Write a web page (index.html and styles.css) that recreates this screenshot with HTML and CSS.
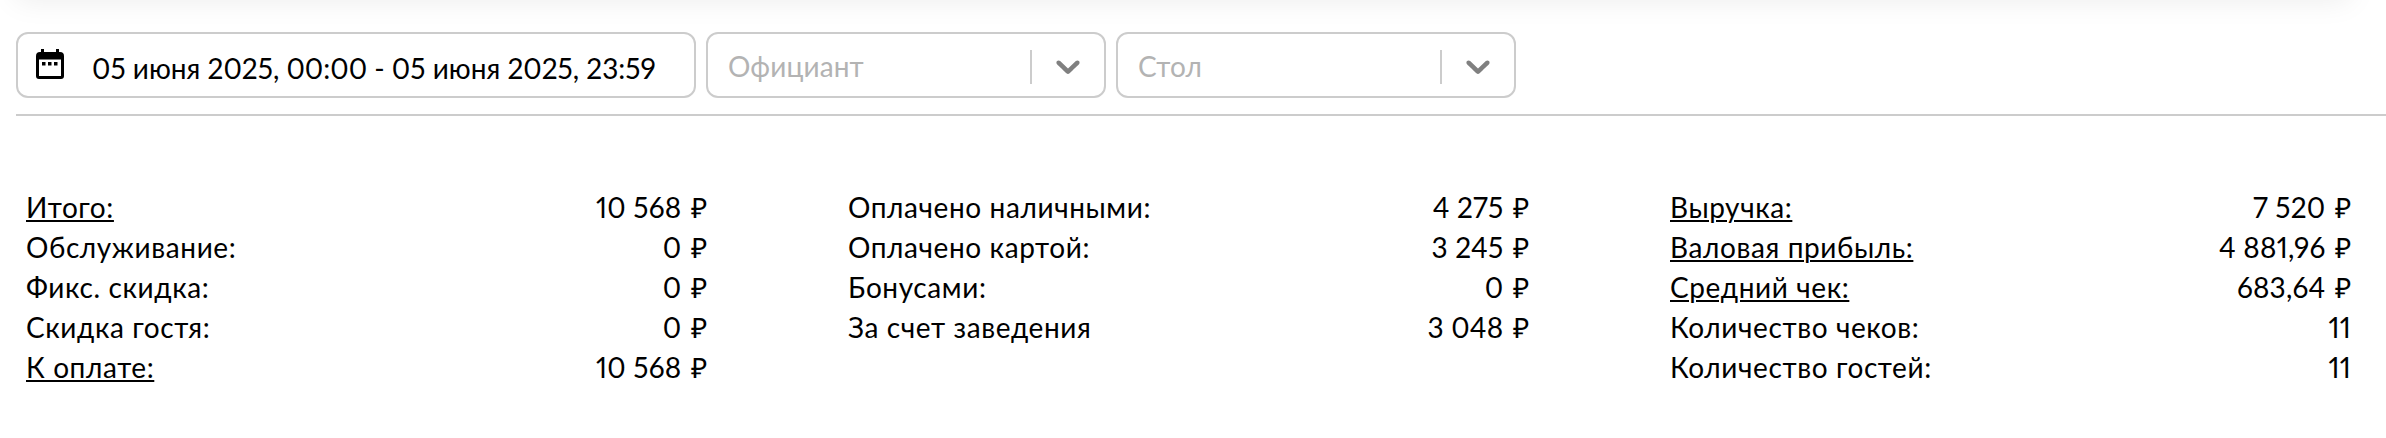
FILE: index.html
```html
<!DOCTYPE html>
<html lang="ru">

<head>
    <meta charset="UTF-8">
    <meta name="viewport" content="width=device-width, initial-scale=1.0">
    <title>Отчет по чекам</title>
    <link rel="stylesheet" href="styles.css">
</head>

<body>
    <div class="top-bar"></div>

    <!-- Фильтры -->
    <div class="filters">
        <div class="date-range">
            <svg class="calendar-icon" width="28" height="30" viewBox="0 0 28 30">
                <path fill="#000" fill-rule="evenodd" d="M5 0h3v3h12V0h3v3h1a4 4 0 0 1 4 4v20a3 3 0 0 1-3 3H3a3 3 0 0 1-3-3V7a4 4 0 0 1 4-4h1zM3 10.500v16.500h22V10.500z" />
                <path fill="#000" d="M6 13h3.500v3.500H6zM12 13h3.500v3.500H12zM18 13h3.500v3.500H18z" />
            </svg>
            <span class="date-text">05 июня 2025, 00:00 - 05 июня 2025, 23:59</span>
        </div>
        <div class="select">
            <span class="placeholder">Официант</span>
            <span class="separator"></span>
            <svg class="arrow" width="40" height="40" viewBox="0 0 20 20">
                <path d="M4.516 7.548c0.436-0.446 1.043-0.481 1.576 0l3.908 3.747 3.908-3.747c0.533-0.481 1.141-0.446 1.574 0 0.436 0.445 0.408 1.197 0 1.615-0.406 0.418-4.695 4.502-4.695 4.502-0.217 0.223-0.502 0.335-0.787 0.335s-0.570-0.112-0.789-0.335c0 0-4.287-4.084-4.695-4.502s-0.436-1.170 0-1.615z" />
            </svg>
        </div>
        <div class="select">
            <span class="placeholder">Стол</span>
            <span class="separator"></span>
            <svg class="arrow" width="40" height="40" viewBox="0 0 20 20">
                <path d="M4.516 7.548c0.436-0.446 1.043-0.481 1.576 0l3.908 3.747 3.908-3.747c0.533-0.481 1.141-0.446 1.574 0 0.436 0.445 0.408 1.197 0 1.615-0.406 0.418-4.695 4.502-4.695 4.502-0.217 0.223-0.502 0.335-0.787 0.335s-0.570-0.112-0.789-0.335c0 0-4.287-4.084-4.695-4.502s-0.436-1.170 0-1.615z" />
            </svg>
        </div>
    </div>

    <!-- Итоги -->
    <div class="summary">
        <div class="column">
            <div class="row"><span class="label hint">Итого:</span><span class="value">10 568 <span class="currency">₽</span></span></div>
            <div class="row"><span class="label">Обслуживание:</span><span class="value">0 <span class="currency">₽</span></span></div>
            <div class="row"><span class="label">Фикс. скидка:</span><span class="value">0 <span class="currency">₽</span></span></div>
            <div class="row"><span class="label">Скидка гостя:</span><span class="value">0 <span class="currency">₽</span></span></div>
            <div class="row"><span class="label hint">К оплате:</span><span class="value">10 568 <span class="currency">₽</span></span></div>
        </div>
        <div class="column">
            <div class="row"><span class="label">Оплачено наличными:</span><span class="value">4 275 <span class="currency">₽</span></span></div>
            <div class="row"><span class="label">Оплачено картой:</span><span class="value">3 245 <span class="currency">₽</span></span></div>
            <div class="row"><span class="label">Бонусами:</span><span class="value">0 <span class="currency">₽</span></span></div>
            <div class="row"><span class="label">За счет заведения</span><span class="value">3 048 <span class="currency">₽</span></span></div>
        </div>
        <div class="column">
            <div class="row"><span class="label hint">Выручка:</span><span class="value">7 520 <span class="currency">₽</span></span></div>
            <div class="row"><span class="label hint">Валовая прибыль:</span><span class="value">4 881,96 <span class="currency">₽</span></span></div>
            <div class="row"><span class="label hint">Средний чек:</span><span class="value">683,64 <span class="currency">₽</span></span></div>
            <div class="row"><span class="label">Количество чеков:</span><span class="value">11</span></div>
            <div class="row"><span class="label">Количество гостей:</span><span class="value">11</span></div>
        </div>
    </div>
</body>

</html>
```
FILE: styles.css
```css
* {
    box-sizing: border-box;
}

body {
    margin: 0;
    background-color: #fff;
    color: #000;
    font-family: Lato, "Open Sans", sans-serif;
    font-size: 28px;
    font-variant-numeric: proportional-nums;
    line-height: 40px;
    overflow: hidden;
}

/* Тень от верхней панели */
.top-bar {
    height: 60px;
    margin: -60px 36px 0 16px;
    box-shadow: 0 0 30px rgba(0, 0, 0, 0.08);
}

/* Фильтры */
.filters {
    display: flex;
    gap: 10px;
    margin-left: 16px;
    padding: 32px 0 16px;
    border-bottom: 2px solid #ccc;
}

.date-range,
.select {
    display: flex;
    align-items: center;
    height: 66px;
    border: 2px solid #ccc;
    border-radius: 12px;
    background-color: #fff;
}

.date-range {
    width: 680px;
    padding-left: 18px;
}

.calendar-icon {
    margin-bottom: 2px;
}

.date-text {
    margin-left: 28px;
    padding-top: 5px;
    white-space: nowrap;
}

.select {
    width: 400px;
    padding: 0 16px 0 20px;
}

.placeholder {
    flex: 1;
    padding-top: 2px;
    color: #b3b3b3;
    letter-spacing: 0.1px;
}

.separator {
    width: 2px;
    height: 34px;
    margin-right: 16px;
    margin-top: 4px;
    background-color: #ccc;
}

.arrow {
    fill: #808080;
    margin-top: 2px;
}

/* Итоги */
.summary {
    display: grid;
    grid-template-columns: repeat(3, 682px);
    column-gap: 140px;
    padding: 71px 0 0 26px;
}

.row {
    display: flex;
    justify-content: space-between;
}

.label {
    letter-spacing: 0.6px;
}

.value {
    padding-right: 1px;
    letter-spacing: 0.2px;
}

.currency {
    margin-left: 2px;
}

.hint {
    text-decoration: underline;
    text-decoration-thickness: 2px;
    text-underline-offset: 2px;
}
```
